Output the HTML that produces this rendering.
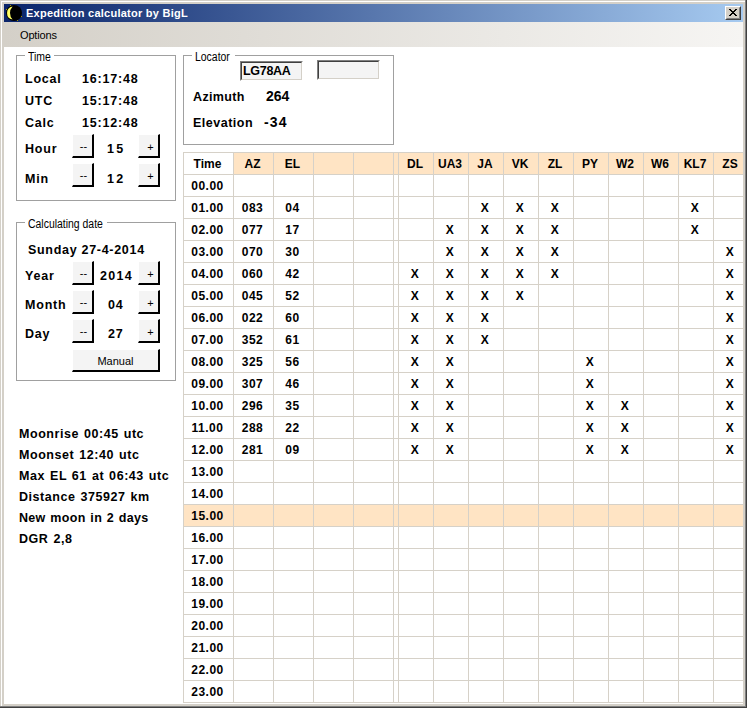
<!DOCTYPE html>
<html lang="en">
<head>
<meta charset="utf-8">
<title>Expedition calculator by BigL</title>
<style>
html,body{margin:0;padding:0;}
body{width:747px;height:708px;overflow:hidden;background:#d4d0c8;font-family:"Liberation Sans",sans-serif;}
#win{position:absolute;left:0;top:0;width:747px;height:708px;background:#d4d0c8;overflow:hidden;}
.fr{position:absolute;}
#title{position:absolute;left:4px;top:4px;width:739px;height:18px;background:linear-gradient(to right,#0a246a,#a6caf0);}
#title .cap{position:absolute;left:22px;letter-spacing:.25px;top:0;height:18px;line-height:18px;color:#fff;font-weight:bold;font-size:11px;white-space:nowrap;}
#close{position:absolute;left:721px;top:2px;width:16px;height:14px;box-sizing:border-box;background:#d4d0c8;border:1px solid;border-color:#fff #404040 #404040 #fff;}
#close i{position:absolute;left:0;top:0;right:0;bottom:0;border:1px solid;border-color:#d4d0c8 #808080 #808080 #d4d0c8;}
#menu{position:absolute;left:4px;top:22px;width:739px;height:25px;z-index:2;background:linear-gradient(to right,#d4d0c8,#f6f5f3);}
#menu span{position:absolute;left:16px;letter-spacing:-.15px;top:4px;line-height:18px;font-size:11px;color:#000;}
#client{position:absolute;left:4px;top:46px;width:739px;height:658px;background:#fff;overflow:hidden;}
.gb{position:absolute;box-sizing:border-box;border:1px solid #a0a0a0;}
.gbl{position:absolute;background:#fff;font-size:12px;line-height:14px;white-space:nowrap;padding:0 3px;color:#000;}
.b{position:absolute;font-weight:bold;font-size:12.5px;letter-spacing:.8px;line-height:16px;white-space:nowrap;color:#000;}
.v{font-size:14px;letter-spacing:0;}
.inf{letter-spacing:.55px;word-spacing:1px;}
.gbl b{display:inline-block;font-weight:normal;transform:scaleX(.87);transform-origin:0 50%;}
.btn{position:absolute;box-sizing:border-box;background:#f4f4f4;border-style:solid;border-width:1px 2px 2px 1px;border-color:#fff #000 #000 #fff;font-size:11px;text-align:center;color:#000;}
.btn i{display:block;font-style:normal;line-height:23px;padding-left:2px;}
.btn i.p{line-height:25px;padding-left:4px;}
.ed{position:absolute;box-sizing:border-box;background:#f4f4f4;border:1px solid;border-color:#808080 #fff #fff #808080;}
.ed i{position:absolute;left:0;top:0;right:0;bottom:0;border:1px solid;border-color:#404040 #d4d0c8 #d4d0c8 #404040;font-style:normal;}
table.grid{position:absolute;left:179px;top:106px;border-collapse:collapse;table-layout:fixed;width:565px;font-weight:bold;font-size:12px;}
table.grid td,table.grid th{border:1px solid #d6d1c8;height:19px;padding:2px 2px 0 0;text-align:center;vertical-align:top;line-height:19px;overflow:hidden;white-space:nowrap;font-weight:bold;}
table.grid th{background:#ffe4c4;}
table.grid th.tm{background:#fff;}
table.grid tr.sel td{background:#ffe4c4;}
table.grid td{letter-spacing:.5px;}
</style>
</head>
<body>
<div id="win">
<div class="fr" style="left:1px;top:1px;width:744px;height:1px;background:#fff"></div>
<div class="fr" style="left:1px;top:1px;width:1px;height:705px;background:#fff"></div>
<div class="fr" style="left:745px;top:0;width:1px;height:707px;background:#808080"></div>
<div class="fr" style="left:0;top:706px;width:746px;height:1px;background:#808080"></div>
<div class="fr" style="left:746px;top:0;width:1px;height:708px;background:#404040"></div>
<div class="fr" style="left:0;top:707px;width:747px;height:1px;background:#404040"></div>
<div id="title">
<svg style="position:absolute;left:2px;top:1px" width="16" height="16" viewBox="0 0 16 16"><circle cx="8" cy="8" r="8" fill="#000"/><path d="M6.6 1.4 A6.7 6.7 0 0 0 6.6 14.6 A9.7 9.7 0 0 1 6.6 1.4 Z" fill="#ffff66"/><rect x="4" y="0" width="1" height="1" fill="#a09000"/><rect x="0" y="4" width="1" height="1" fill="#a09000"/><rect x="15" y="11" width="1" height="1" fill="#a09000"/><rect x="11" y="15" width="1" height="1" fill="#a09000"/></svg>
<span class="cap">Expedition calculator by BigL</span>
<div id="close"><i></i><svg style="position:absolute;left:3px;top:2px" width="8" height="7" viewBox="0 0 8 7" shape-rendering="crispEdges" fill="#000"><rect x="0" y="0" width="2" height="1"/><rect x="6" y="0" width="2" height="1"/><rect x="1" y="1" width="2" height="1"/><rect x="5" y="1" width="2" height="1"/><rect x="2" y="2" width="4" height="1"/><rect x="3" y="3" width="2" height="1"/><rect x="2" y="4" width="4" height="1"/><rect x="1" y="5" width="2" height="1"/><rect x="5" y="5" width="2" height="1"/><rect x="0" y="6" width="2" height="1"/><rect x="6" y="6" width="2" height="1"/></svg></div>
</div>
<div id="menu"><span>Options</span></div>
<div id="client">
<!-- Time group -->
<div class="gb" style="left:12px;top:9px;width:160px;height:146px"></div>
<span class="gbl" style="left:21px;top:4px;width:23px"><b>Time</b></span>
<span class="b" style="left:21px;top:25px">Local</span><span class="b" style="left:78px;top:25px">16:17:48</span>
<span class="b" style="left:21px;top:47px">UTC</span><span class="b" style="left:78px;top:47px">15:17:48</span>
<span class="b" style="left:21px;top:69px">Calc</span><span class="b" style="left:78px;top:69px">15:12:48</span>
<span class="b" style="left:21px;top:95px">Hour</span><span class="b" style="left:103px;top:95px;letter-spacing:2.4px">15</span>
<span class="b" style="left:21px;top:125px">Min</span><span class="b" style="left:103px;top:125px;letter-spacing:2.4px">12</span>
<div class="btn" style="left:68px;top:88px;width:22px;height:24px"><i>--</i></div>
<div class="btn" style="left:134px;top:88px;width:22px;height:24px"><i class="p">+</i></div>
<div class="btn" style="left:68px;top:117px;width:22px;height:24px"><i>--</i></div>
<div class="btn" style="left:134px;top:117px;width:22px;height:24px"><i class="p">+</i></div>
<!-- Date group -->
<div class="gb" style="left:12px;top:176px;width:160px;height:159px"></div>
<span class="gbl" style="left:21px;top:171px;width:76px"><b>Calculating date</b></span>
<span class="b" style="left:24px;top:196px;letter-spacing:.7px">Sunday 27-4-2014</span>
<span class="b" style="left:21px;top:222px">Year</span><span class="b" style="left:96px;top:222px;letter-spacing:1.3px">2014</span>
<span class="b" style="left:21px;top:251px">Month</span><span class="b" style="left:104px;top:251px">04</span>
<span class="b" style="left:21px;top:280px">Day</span><span class="b" style="left:104px;top:280px">27</span>
<div class="btn" style="left:68px;top:215px;width:22px;height:24px"><i>--</i></div>
<div class="btn" style="left:134px;top:215px;width:22px;height:24px"><i class="p">+</i></div>
<div class="btn" style="left:68px;top:244px;width:22px;height:24px"><i>--</i></div>
<div class="btn" style="left:134px;top:244px;width:22px;height:24px"><i class="p">+</i></div>
<div class="btn" style="left:68px;top:273px;width:22px;height:24px"><i>--</i></div>
<div class="btn" style="left:134px;top:273px;width:22px;height:24px"><i class="p">+</i></div>
<div class="btn" style="left:68px;top:303px;width:88px;height:23px"><i style="line-height:22px;padding-left:0">Manual</i></div>
<!-- info -->
<span class="b inf" style="left:15px;top:380px">Moonrise 00:45 utc</span>
<span class="b inf" style="left:15px;top:401px">Moonset 12:40 utc</span>
<span class="b inf" style="left:15px;top:422px">Max EL 61 at 06:43 utc</span>
<span class="b inf" style="left:15px;top:443px">Distance 375927 km</span>
<span class="b inf" style="left:15px;top:464px;letter-spacing:.3px">New moon in 2 days</span>
<span class="b inf" style="left:15px;top:485px">DGR 2,8</span>
<!-- Locator group -->
<div class="gb" style="left:179px;top:9px;width:211px;height:90px"></div>
<span class="gbl" style="left:188px;top:4px;width:37px"><b>Locator</b></span>
<div class="ed" style="left:236px;top:15px;width:63px;height:20px"><i></i><span class="b" style="left:2px;top:1px;letter-spacing:-.3px">LG78AA</span></div>
<div class="ed" style="left:313px;top:14px;width:63px;height:20px"><i></i></div>
<span class="b" style="left:189px;top:43px;letter-spacing:.35px">Azimuth</span><span class="b v" style="left:262px;top:42px">264</span>
<span class="b" style="left:189px;top:69px;letter-spacing:.5px">Elevation</span><span class="b v" style="left:260px;top:68px;letter-spacing:1.2px">-34</span>
<!-- grid -->
<div>
<table class="grid">
<colgroup><col style="width:50px"><col style="width:40px"><col style="width:40px"><col style="width:40px"><col style="width:40px"><col style="width:5px"><col style="width:35px"><col style="width:35px"><col style="width:35px"><col style="width:35px"><col style="width:35px"><col style="width:35px"><col style="width:35px"><col style="width:35px"><col style="width:35px"><col style="width:35px"></colgroup>
<tr class="hd"><th class="tm">Time</th><th>AZ</th><th>EL</th><th></th><th></th><th></th><th>DL</th><th>UA3</th><th>JA</th><th>VK</th><th>ZL</th><th>PY</th><th>W2</th><th>W6</th><th>KL7</th><th>ZS</th></tr>
<tr><td class="tm">00.00</td><td></td><td></td><td></td><td></td><td></td><td></td><td></td><td></td><td></td><td></td><td></td><td></td><td></td><td></td><td></td></tr>
<tr><td class="tm">01.00</td><td>083</td><td>04</td><td></td><td></td><td></td><td></td><td></td><td>X</td><td>X</td><td>X</td><td></td><td></td><td></td><td>X</td><td></td></tr>
<tr><td class="tm">02.00</td><td>077</td><td>17</td><td></td><td></td><td></td><td></td><td>X</td><td>X</td><td>X</td><td>X</td><td></td><td></td><td></td><td>X</td><td></td></tr>
<tr><td class="tm">03.00</td><td>070</td><td>30</td><td></td><td></td><td></td><td></td><td>X</td><td>X</td><td>X</td><td>X</td><td></td><td></td><td></td><td></td><td>X</td></tr>
<tr><td class="tm">04.00</td><td>060</td><td>42</td><td></td><td></td><td></td><td>X</td><td>X</td><td>X</td><td>X</td><td>X</td><td></td><td></td><td></td><td></td><td>X</td></tr>
<tr><td class="tm">05.00</td><td>045</td><td>52</td><td></td><td></td><td></td><td>X</td><td>X</td><td>X</td><td>X</td><td></td><td></td><td></td><td></td><td></td><td>X</td></tr>
<tr><td class="tm">06.00</td><td>022</td><td>60</td><td></td><td></td><td></td><td>X</td><td>X</td><td>X</td><td></td><td></td><td></td><td></td><td></td><td></td><td>X</td></tr>
<tr><td class="tm">07.00</td><td>352</td><td>61</td><td></td><td></td><td></td><td>X</td><td>X</td><td>X</td><td></td><td></td><td></td><td></td><td></td><td></td><td>X</td></tr>
<tr><td class="tm">08.00</td><td>325</td><td>56</td><td></td><td></td><td></td><td>X</td><td>X</td><td></td><td></td><td></td><td>X</td><td></td><td></td><td></td><td>X</td></tr>
<tr><td class="tm">09.00</td><td>307</td><td>46</td><td></td><td></td><td></td><td>X</td><td>X</td><td></td><td></td><td></td><td>X</td><td></td><td></td><td></td><td>X</td></tr>
<tr><td class="tm">10.00</td><td>296</td><td>35</td><td></td><td></td><td></td><td>X</td><td>X</td><td></td><td></td><td></td><td>X</td><td>X</td><td></td><td></td><td>X</td></tr>
<tr><td class="tm">11.00</td><td>288</td><td>22</td><td></td><td></td><td></td><td>X</td><td>X</td><td></td><td></td><td></td><td>X</td><td>X</td><td></td><td></td><td>X</td></tr>
<tr><td class="tm">12.00</td><td>281</td><td>09</td><td></td><td></td><td></td><td>X</td><td>X</td><td></td><td></td><td></td><td>X</td><td>X</td><td></td><td></td><td>X</td></tr>
<tr><td class="tm">13.00</td><td></td><td></td><td></td><td></td><td></td><td></td><td></td><td></td><td></td><td></td><td></td><td></td><td></td><td></td><td></td></tr>
<tr><td class="tm">14.00</td><td></td><td></td><td></td><td></td><td></td><td></td><td></td><td></td><td></td><td></td><td></td><td></td><td></td><td></td><td></td></tr>
<tr class="sel"><td class="tm">15.00</td><td></td><td></td><td></td><td></td><td></td><td></td><td></td><td></td><td></td><td></td><td></td><td></td><td></td><td></td><td></td></tr>
<tr><td class="tm">16.00</td><td></td><td></td><td></td><td></td><td></td><td></td><td></td><td></td><td></td><td></td><td></td><td></td><td></td><td></td><td></td></tr>
<tr><td class="tm">17.00</td><td></td><td></td><td></td><td></td><td></td><td></td><td></td><td></td><td></td><td></td><td></td><td></td><td></td><td></td><td></td></tr>
<tr><td class="tm">18.00</td><td></td><td></td><td></td><td></td><td></td><td></td><td></td><td></td><td></td><td></td><td></td><td></td><td></td><td></td><td></td></tr>
<tr><td class="tm">19.00</td><td></td><td></td><td></td><td></td><td></td><td></td><td></td><td></td><td></td><td></td><td></td><td></td><td></td><td></td><td></td></tr>
<tr><td class="tm">20.00</td><td></td><td></td><td></td><td></td><td></td><td></td><td></td><td></td><td></td><td></td><td></td><td></td><td></td><td></td><td></td></tr>
<tr><td class="tm">21.00</td><td></td><td></td><td></td><td></td><td></td><td></td><td></td><td></td><td></td><td></td><td></td><td></td><td></td><td></td><td></td></tr>
<tr><td class="tm">22.00</td><td></td><td></td><td></td><td></td><td></td><td></td><td></td><td></td><td></td><td></td><td></td><td></td><td></td><td></td><td></td></tr>
<tr><td class="tm">23.00</td><td></td><td></td><td></td><td></td><td></td><td></td><td></td><td></td><td></td><td></td><td></td><td></td><td></td><td></td><td></td></tr>
</table>
</div>
</div>
</body>
</html>
